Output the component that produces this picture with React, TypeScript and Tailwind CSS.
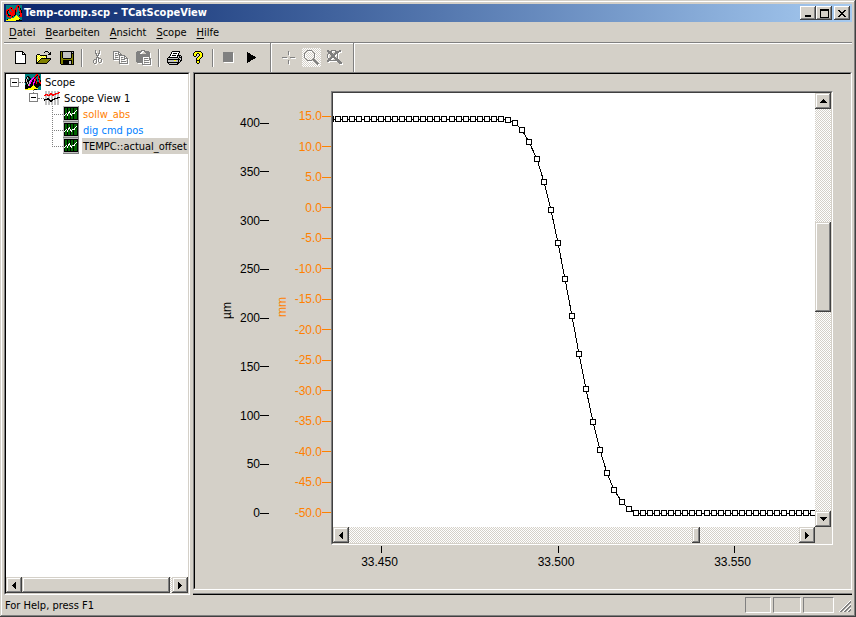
import type { ReactNode } from 'react';

const PALETTE: Record<string, string> = {
    K: '#000000',
    W: '#ffffff',
    G: '#808080',
    L: '#c0c0c0',
    O: '#808000',
    Y: '#ffff00',
    P: '#ffff99',
    R: '#ff0000',
    T: '#008080',
    M: '#ff00ff',
    D: '#006400',
};

const ICONS = {
    fileNew: [
        'KKKKKKKK...',
        'KWWWWWWKK..',
        'KWWWWWWKWK.',
        'KWWWWWWKKKK',
        'KWWWWWWWWWK',
        'KWWWWWWWWWK',
        'KWWWWWWWWWK',
        'KWWWWWWWWWK',
        'KWWWWWWWWWK',
        'KWWWWWWWWWK',
        'KWWWWWWWWWK',
        'KWWWWWWWWWK',
        'KKKKKKKKKKK',
    ],
    fileOpen: [
        '.........KKK...',
        '........K...K.K',
        '.............KK',
        '.KKK........KKK',
        'KPYPKKKKKKK....',
        'KYPYPYPYPYK....',
        'KPYPYPYPYPK....',
        'KYPYPKKKKKKKKKK',
        'KPYPKOOOOOOOOOK',
        'KYPKOOOOOOOOOK.',
        'KPKOOOOOOOOOK..',
        'KKOOOOOOOOOK...',
        'KKKKKKKKKKK....',
    ],
    save: [
        'KKKKKKKKKKKKKK',
        'KOKLLLLLLLLKLK',
        'KOKLLLLLLLLKKK',
        'KOKLLLLLLLLKOK',
        'KOKLLLLLLLLKOK',
        'KOKLLLLLLLLKOK',
        'KOKLLLLLLLLKOK',
        'KOOKKKKKKKKOOK',
        'KOOOOOOOOOOOOK',
        'KOOKKKKKKKKKOK',
        'KOOKKKKKKLLKOK',
        'KOOKKKKKKLLKOK',
        'KOOKKKKKKLLKOK',
        '.KKKKKKKKKKKKK',
    ],
    cut: [
        '..G...G..',
        '..G...G..',
        '..G...G..',
        '..GG.GG..',
        '...G.G...',
        '...GGG...',
        '....G....',
        '...GGG...',
        '...G.GGG.',
        '.GGG.G..G',
        'G..G.G..G',
        'G..G.G..G',
        'G..G..GG.',
        '.GG......',
    ],
    copy: [
        'GGGGGG.........',
        'G....GG........',
        'G.GG.G.G.......',
        'G....GGGG......',
        'G.GGG.GGGGGG...',
        'G.....G....GG..',
        'G.GGG.G.GG.G.G.',
        'G.....G....GGGG',
        'GGGGGGG.GGGG..G',
        '......G.......G',
        '......G.GGGGG.G',
        '......G.......G',
        '......GGGGGGGGG',
    ],
    paste: [
        '.....GGGG......',
        '.GGGGG..GGGGG..',
        'GGGGG....GGGGG.',
        'GGGG......GGGG.',
        'GGGGGGGGGGGGGG.',
        'GGGGGGGGGGGGGG.',
        'GGGGGGGGGGGGGG.',
        'GGGGGGG......G.',
        'GGGGGGG.GGGG.GG',
        'GGGGGGG......GG',
        'GGGGGGG.GGGGG.G',
        'GGGGGGG.......G',
        '.GGGGGG.GGGGG.G',
        '......G.......G',
        '......GGGGGGGGG',
    ],
    print: [
        '.....KKKKKKKK...',
        '....KWWWWWWWK...',
        '....KWKKKKWK....',
        '...KWWWWWWWK....',
        '...KWKKKKWKKKK..',
        '..KWWWWWWWKLKLK.',
        '.KKKKKKKKKKLKKK.',
        'KLLLLLLLLLLKLLK.',
        'KKKKKKKKKKKKKLK.',
        'KLLLLLLYYLLKLKK.',
        'KLLLLLLLLLLKLK..',
        'KKKKKKKKKKKKK...',
        '.KLLLLLLLLKK....',
        '..KKKKKKKKK.....',
    ],
    help: [
        '..KKKKKK..',
        '.KYYYYYYK.',
        'KYYYKKYYYK',
        'KYYK..KYYK',
        'KYYK..KYYK',
        '.KK..KYYYK',
        '....KYYYK.',
        '...KYYYK..',
        '...KYYK...',
        '...KKKK...',
        '...KYYK...',
        '...KYYK...',
        '....KK....',
    ],
    stop: Array<string>(10).fill('GGGGGGGGGG'),
    play: [
        'K........',
        'KKK......',
        'KKKK.....',
        'KKKKKK...',
        'KKKKKKKK.',
        'KKKKKKKKK',
        'KKKKKKKK.',
        'KKKKKK...',
        'KKKK.....',
        'KKK......',
        'K........',
    ],
    cross: [
        '......G......',
        '......G......',
        '......G......',
        '......G......',
        '.............',
        '.............',
        'GGGGG...GGGGG',
        '.............',
        '.............',
        '......G......',
        '......G......',
        '......G......',
        '......G......',
    ],
    zoom: [
        '...GGGGG.......',
        '..G.....G......',
        '.G.......G.....',
        'G.........G....',
        'G.........G....',
        'G.........G....',
        'G.........G....',
        'G.........G....',
        '.G.......G.....',
        '..G.....GGG....',
        '...GGGGG.GGG...',
        '..........GGG..',
        '...........GGG.',
        '............GGG',
        '.............G.',
    ],
    zoomOff: [
        'GG..GGGGG...GG.',
        'GGGGG...GGGGGG.',
        '.GGGG...GGGG...',
        '.GGGGG.GGGG....',
        'G..GGGGGG.G....',
        'G...GGGG..G....',
        'G...GGGG..G....',
        'G..GGGGGG.G....',
        '.GGGG..GGGG....',
        '.GGG....GGGG...',
        'GGGGGGGGGGGGG..',
        'GG........GGGG.',
        '...........GGGG',
        '............GGG',
    ],
    appLogo: [
        'TTTTTTTTTTTRRTTT',
        'TTTTTTTTTTRRKRTT',
        'TTTTRRTTTTRTKRTT',
        'TTTRRKRTTRRTTRKT',
        'TRRRTRRTRRRTTRKT',
        'RRKRTRRRRKRTTRRK',
        'RKTRRTRRRKRTTTRK',
        'RKTRRRRRRKTTTKRK',
        'RKTTRRRRRKTTTTRR',
        'RRKTRRRRRKTTTTRR',
        'TRKKKRRRKTYTTKRR',
        'TRRRTRKTTYYYTRRR',
        'TTTRRRTTYYYYYTTT',
        'TTTTTYYYYYYYYYTT',
        'TKYYYYYYYYYYYKTT',
        'YYYYYYYYYYKKKKKK',
    ],
    scope: [
        'TTTTTTTTTTTRRTTT',
        'TTTTTTTTTTRRKRTT',
        'TTKKTTTTTTRKTRKT',
        'TKLKKTTTMRKTTRKT',
        'TKLTKKTMMKRTTRRT',
        'KLKTKKMMKMRKTKRT',
        'KLKKKLMKKMRKTTRK',
        'KLKKLMMKKMKRTTRK',
        'KKLKLMKKMMKRKKRR',
        'TKLKLMKKMKKRKKKR',
        'TKKLMKKKMKKKKKKK',
        'KKKLMKKKYKKKKKKK',
        'KKKKKKKYYYKKKKTT',
        'KKKKKKYYYYYKKTTT',
        'KKKYYYYYYYYYYTTT',
        'YYYYYYYYYKKKTTTT',
    ],
    view: [
        'WLLWLLWLLWLLWLLW',
        'WLLWLLWLLWLLWLRR',
        'WLLWLLRRLWLRRRRW',
        'WRRRLRRRRRRRLLLW',
        'RRLRRRLLRRLLWLLW',
        'WLLWLLWLLWLLWLLW',
        'WLLWLLWLLWLLWKKK',
        'WLLKKLWLLWKKKKLW',
        'KKKKKKWLKKKLWLLW',
        'KLLWLKKKKWLLWLLW',
        'WLLWLLKKLWLLWLLW',
        'WLLWLLWLLWLLWLLW',
        'WLLWLLWLLWLLWLLW',
        'WLLWLLWLLWLLWLLW',
    ],
    channel: [
        'LLLLLLLLLLLLLLLG',
        'LKKKKKKKKKKKKKKG',
        'LKDDKDDKDDKDDDKG',
        'LKDDKDDKDDKDDDKG',
        'LKDDKDDKDDKDDWKG',
        'LKDDKDWKDDKDWDKG',
        'LKDDKWWKDDKWDDKG',
        'LKDWKWDWDWWWDDKG',
        'LKWDWDDWWDKDDDKG',
        'LWDDWDDKWDKDDDKG',
        'LKDDKDDKDDKDDDKG',
        'LKDDKDDKDDKDDDKG',
        'LKDDKDDKDDKDDDKG',
        'LKKKKKKKKKKKKKKG',
        'LLLLLLLLLLLLLLLG',
        'GGGGGGGGGGGGGGGG',
    ],
    minimize: ['......', '......', '......', '......', '......', '......', 'KKKKKK', 'KKKKKK'],
    maximize: [
        'KKKKKKKKK',
        'KKKKKKKKK',
        'K.......K',
        'K.......K',
        'K.......K',
        'K.......K',
        'K.......K',
        'K.......K',
        'KKKKKKKKK',
    ],
    close: ['KK....KK', '.KK..KK.', '..KKKK..', '...KK...', '..KKKK..', '.KK..KK.', 'KK....KK'],
    up: ['...K...', '..KKK..', '.KKKKK.', 'KKKKKKK'],
    down: ['KKKKKKK', '.KKKKK.', '..KKK..', '...K...'],
    left: ['...K', '..KK', '.KKK', 'KKKK', '.KKK', '..KK', '...K'],
    right: ['K...', 'KK..', 'KKK.', 'KKKK', 'KKK.', 'KK..', 'K...'],
    expanded: [
        'GGGGGGGGG',
        'GWWWWWWWG',
        'GWWWWWWWG',
        'GWWWWWWWG',
        'GWKKKKKWG',
        'GWWWWWWWG',
        'GWWWWWWWG',
        'GWWWWWWWG',
        'GGGGGGGGG',
    ],
};

type IconName = keyof typeof ICONS;

function PixelIcon({ name, disabled = false }: { name: IconName; disabled?: boolean }) {
    const rows = ICONS[name];
    const pad = disabled ? 1 : 0;
    const w = rows[0].length + pad;
    const h = rows.length + pad;
    const cells = rows.flatMap((row, y) =>
        [...row].map((c, x) => ({ c, x, y })).filter((p) => p.c !== '.')
    );

    return (
        <svg
            width={w}
            height={h}
            viewBox={`0 0 ${w} ${h}`}
            shapeRendering="crispEdges"
            className="block shrink-0"
            aria-hidden="true"
        >
            {disabled &&
                cells.map((p) => (
                    <rect key={`s${p.x}-${p.y}`} x={p.x + 1} y={p.y + 1} width="1" height="1" fill="#ffffff" />
                ))}
            {cells.map((p) => (
                <rect key={`${p.x}-${p.y}`} x={p.x} y={p.y} width="1" height="1" fill={PALETTE[p.c]} />
            ))}
        </svg>
    );
}

const RAISED =
    'bg-[#d4d0c8] shadow-[inset_-1px_-1px_0_#404040,inset_1px_1px_0_#d4d0c8,inset_-2px_-2px_0_#808080,inset_2px_2px_0_#ffffff]';
const CAPTION_BUTTON =
    'flex h-3.5 w-4 items-center justify-center bg-[#d4d0c8] shadow-[inset_-1px_-1px_0_#404040,inset_1px_1px_0_#ffffff,inset_-2px_-2px_0_#808080]';
const SUNKEN = 'border border-t-[#808080] border-l-[#808080] border-r-white border-b-white';

// before / thumb / after are shares of the track
function Scrollbar({
    vertical = false,
    before,
    thumb,
    after,
}: {
    vertical?: boolean;
    before: number;
    thumb: number;
    after: number;
}) {
    return (
        <div
            className={`flex shrink-0 bg-[conic-gradient(#ffffff_25%,#d4d0c8_0_50%,#ffffff_0_75%,#d4d0c8_0)] bg-[length:2px_2px] ${
                vertical ? 'w-4 flex-col' : 'h-4'
            }`}
        >
            <button
                aria-label={vertical ? 'Scroll up' : 'Scroll left'}
                className={`flex size-4 shrink-0 items-center justify-center ${RAISED}`}
            >
                <PixelIcon name={vertical ? 'up' : 'left'} />
            </button>
            <div className="basis-0" style={{ flexGrow: before }} />
            <div className={`basis-0 ${RAISED}`} style={{ flexGrow: thumb }} />
            <div className="basis-0" style={{ flexGrow: after }} />
            <button
                aria-label={vertical ? 'Scroll down' : 'Scroll right'}
                className={`flex size-4 shrink-0 items-center justify-center ${RAISED}`}
            >
                <PixelIcon name={vertical ? 'down' : 'right'} />
            </button>
        </div>
    );
}

function TitleBar() {
    return (
        <header className="flex h-[18px] shrink-0 items-center bg-linear-to-r from-[#0a246a] to-[#a6caf0] px-0.5">
            <PixelIcon name="appLogo" />
            <h1 className="ml-0.5 flex-1 text-[11px] leading-4 font-bold text-white">
                Temp-comp.scp - TCatScopeView
            </h1>
            <button aria-label="Minimize" className={CAPTION_BUTTON}>
                <PixelIcon name="minimize" />
            </button>
            <button aria-label="Maximize" className={CAPTION_BUTTON}>
                <PixelIcon name="maximize" />
            </button>
            <button aria-label="Close" className={`ml-0.5 ${CAPTION_BUTTON}`}>
                <PixelIcon name="close" />
            </button>
        </header>
    );
}

const MENU = ['Datei', 'Bearbeiten', 'Ansicht', 'Scope', 'Hilfe'];

function MenuBar() {
    return (
        <nav className="flex h-5 shrink-0 items-center gap-2.5 px-[5px] pt-0.5">
            {MENU.map((item) => (
                <button key={item}>
                    <span className="underline underline-offset-2">{item[0]}</span>
                    {item.slice(1)}
                </button>
            ))}
        </nav>
    );
}

function ToolButton({ icon, label, disabled, active }: { icon: IconName; label: string; disabled?: boolean; active?: boolean }) {
    return (
        <button aria-label={label} disabled={disabled} className="flex h-[22px] w-[23px] items-center justify-center">
            {active ? (
                <span className="flex size-[19px] shrink-0 items-center justify-center bg-[conic-gradient(#ffffff_25%,#d4d0c8_0_50%,#ffffff_0_75%,#d4d0c8_0)] bg-[length:2px_2px]">
                    <PixelIcon name={icon} disabled={disabled} />
                </span>
            ) : (
                <PixelIcon name={icon} disabled={disabled} />
            )}
        </button>
    );
}

function ToolGroup({ children }: { children: ReactNode }) {
    return (
        <div className="flex items-center border-r border-r-white pr-2 pl-[5px] shadow-[inset_-1px_0_0_#808080]">
            {children}
        </div>
    );
}

function Separator() {
    return <div className="mx-[3px] h-[18px] w-0.5 border-r border-l border-r-white border-l-[#808080]" />;
}

function Toolbar() {
    return (
        <div className="flex h-[30px] shrink-0 border-t border-t-[#808080] shadow-[inset_0_1px_0_#ffffff]">
            <ToolGroup>
                <ToolButton icon="fileNew" label="Neu" />
                <ToolButton icon="fileOpen" label="Öffnen" />
                <ToolButton icon="save" label="Speichern" />
                <Separator />
                <ToolButton icon="cut" label="Ausschneiden" disabled />
                <ToolButton icon="copy" label="Kopieren" disabled />
                <ToolButton icon="paste" label="Einfügen" disabled />
                <Separator />
                <ToolButton icon="print" label="Drucken" />
                <ToolButton icon="help" label="Hilfe" />
                <Separator />
                <ToolButton icon="stop" label="Stop" disabled />
                <ToolButton icon="play" label="Start" />
            </ToolGroup>
            <ToolGroup>
                <ToolButton icon="cross" label="Cursor" disabled />
                <ToolButton icon="zoom" label="Zoom" disabled active />
                <ToolButton icon="zoomOff" label="Zoom aus" disabled />
            </ToolGroup>
        </div>
    );
}

const CHANNELS = [
    { name: 'sollw_abs', style: 'text-[#ff8000]' },
    { name: 'dig cmd pos', style: 'text-[#0080ff]' },
    { name: 'TEMPC::actual_offset', style: 'bg-[#d4d0c8] flex-1' },
];

function TreePanel() {
    return (
        <aside className={`flex w-[186px] shrink-0 flex-col ${SUNKEN}`}>
            <div className="flex min-h-0 flex-1 flex-col border border-t-black border-r-[#d4d0c8] border-b-[#d4d0c8] border-l-black bg-white">
                <ul className="min-h-0 flex-1 overflow-hidden leading-4 whitespace-nowrap">
                    <li className="flex h-4 items-center pl-1">
                        <PixelIcon name="expanded" />
                        <span className="w-1.5 border-t border-dotted border-[#808080]" />
                        <PixelIcon name="scope" />
                        <span className="ml-1 pt-0.5">Scope</span>
                    </li>
                    <li className="flex h-4 items-center pl-[23px]">
                        <span className="flex h-4 flex-col items-center">
                            <span className="h-[3px] border-l border-dotted border-[#808080]" />
                            <PixelIcon name="expanded" />
                        </span>
                        <span className="w-1.5 border-t border-dotted border-[#808080]" />
                        <PixelIcon name="view" />
                        <span className="ml-1 pt-0.5">Scope View 1</span>
                    </li>
                    {CHANNELS.map((channel, i) => (
                        <li key={channel.name} className="flex h-4 items-center pl-[46px]">
                            <svg width="11" height="16" className="shrink-0" shapeRendering="crispEdges" aria-hidden="true">
                                <path
                                    d={i === CHANNELS.length - 1 ? 'M.5 0V9M0 8.5H11' : 'M.5 0V16M0 8.5H11'}
                                    stroke="#808080"
                                    strokeDasharray="1 1"
                                />
                            </svg>
                            <PixelIcon name="channel" />
                            <span className={`ml-[3px] h-4 px-px pt-px leading-4 ${channel.style}`}>{channel.name}</span>
                        </li>
                    ))}
                </ul>
                <Scrollbar before={0} thumb={148} after={2} />
            </div>
        </aside>
    );
}

const MICRON_SCALE = ['400', '350', '300', '250', '200', '150', '100', '50', '0'];
const MM_SCALE = [
    '15.0', '10.0', '5.0', '0.0', '-5.0', '-10.0', '-15.0',
    '-20.0', '-25.0', '-30.0', '-35.0', '-40.0', '-45.0', '-50.0',
];
const TIME_SCALE = ['33.450', '33.500', '33.550'];

function YScale({ values, unit, className }: { values: string[]; unit: string; className: string }) {
    return (
        <div className={`flex shrink-0 justify-between ${className}`}>
            <div className="flex w-4 items-center justify-center pb-4">
                <span className="rotate-180 leading-4 [writing-mode:vertical-rl]">{unit}</span>
            </div>
            <ul className="flex flex-col justify-between">
                {values.map((value) => (
                    <li key={value} className="flex h-3 items-center justify-end leading-3">
                        {value}
                        <span className="h-px w-[9px] bg-current" />
                    </li>
                ))}
            </ul>
        </div>
    );
}

// sample height between the upper and the lower plateau
const EDGE = [27, 30, 37, 49, 66, 89, 117, 150, 186, 223, 261, 296, 329, 357, 380, 397, 409, 416];
const SAMPLES = Array.from({ length: 69 }, (_, i) => {
    const k = i - 25;
    const x = Math.round(175.2 + k * 7.083);
    if (k < 0) return { x, y: 26 };
    return { x, y: k < EDGE.length ? EDGE[k] : 420 };
});

function Plot() {
    return (
        <svg
            viewBox="0 0 482 434"
            preserveAspectRatio="none"
            shapeRendering="crispEdges"
            className="block h-full min-h-0 w-full min-w-0 bg-white"
            role="img"
            aria-label="TEMPC::actual_offset"
        >
            <polyline points={SAMPLES.map((s) => `${s.x},${s.y}`).join(' ')} fill="none" stroke="#000000" />
            {SAMPLES.map((s) => (
                <rect key={s.x} x={s.x - 2.5} y={s.y - 2.5} width="5" height="5" fill="#ffffff" stroke="#000000" />
            ))}
        </svg>
    );
}

function ScopePanel() {
    return (
        <main className={`flex min-h-0 flex-1 flex-col ${SUNKEN}`}>
            <div className="flex min-h-0 flex-1 flex-col border border-t-black border-r-[#d4d0c8] border-b-[#d4d0c8] border-l-black pt-[17px] pr-[17px] font-['Liberation_Sans',Arial,sans-serif] text-[12px]">
                <div className="flex min-h-0 flex-1">
                    <YScale values={MICRON_SCALE} unit="µm" className="ml-6 w-[50px] pt-[26px] pb-[26px]" />
                    <YScale values={MM_SCALE} unit="mm" className="ml-[5px] w-[57px] pt-[19px] pb-[26px] text-[#ff8000]" />
                    <div className={`flex min-w-0 flex-1 ${SUNKEN}`}>
                        <div className="grid min-h-0 min-w-0 flex-1 grid-cols-[minmax(0,1fr)_16px] grid-rows-[minmax(0,1fr)_16px] border border-t-[#404040] border-r-[#d4d0c8] border-b-[#d4d0c8] border-l-[#404040]">
                            <Plot />
                            <Scrollbar vertical before={113} thumb={90} after={199} />
                            <Scrollbar before={343} thumb={8} after={99} />
                        </div>
                    </div>
                </div>
                <ul className="ml-[136px] flex h-[43px] shrink-0 justify-between pt-px pr-[78px] pl-[30px]">
                    {TIME_SCALE.map((value) => (
                        <li key={value} className="flex w-[41px] flex-col items-center">
                            <span className="h-[7px] w-px bg-black" />
                            <span className="pt-[3px] pr-1 leading-3">{value}</span>
                        </li>
                    ))}
                </ul>
            </div>
        </main>
    );
}

function StatusBar() {
    return (
        <footer className="flex h-[18px] shrink-0 gap-0.5 pt-0.5">
            <p className="flex-1 pt-px pl-px leading-4">For Help, press F1</p>
            <div className={`w-[26px] ${SUNKEN}`} />
            <div className={`w-7 ${SUNKEN}`} />
            <div className={`w-[31px] ${SUNKEN}`} />
            <svg width="16" height="16" className="shrink-0" shapeRendering="crispEdges" aria-hidden="true">
                <path d="M3 15L15 3M7 15L15 7M11 15L15 11" stroke="#ffffff" />
                <path d="M4 15L15 4M5 15L15 5M8 15L15 8M9 15L15 9M12 15L15 12M13 15L15 13" stroke="#808080" />
            </svg>
        </footer>
    );
}

export default function App() {
    return (
        <div className="flex h-screen flex-col bg-[#d4d0c8] p-1 font-['DejaVu_Sans_Condensed','DejaVu_Sans',sans-serif] text-[11px] text-black shadow-[inset_-1px_-1px_0_#404040,inset_1px_1px_0_#d4d0c8,inset_-2px_-2px_0_#808080,inset_2px_2px_0_#ffffff]">
            <TitleBar />
            <MenuBar />
            <Toolbar />
            <div className="flex min-h-0 flex-1 gap-[3px]">
                <TreePanel />
                <div className="flex min-w-0 flex-1 flex-col">
                    <ScopePanel />
                    {/* top edge of the collapsed lower pane */}
                    <div className="mt-[3px] h-0.5 shrink-0 border-t border-t-[#808080] bg-black" />
                </div>
            </div>
            <StatusBar />
        </div>
    );
}
